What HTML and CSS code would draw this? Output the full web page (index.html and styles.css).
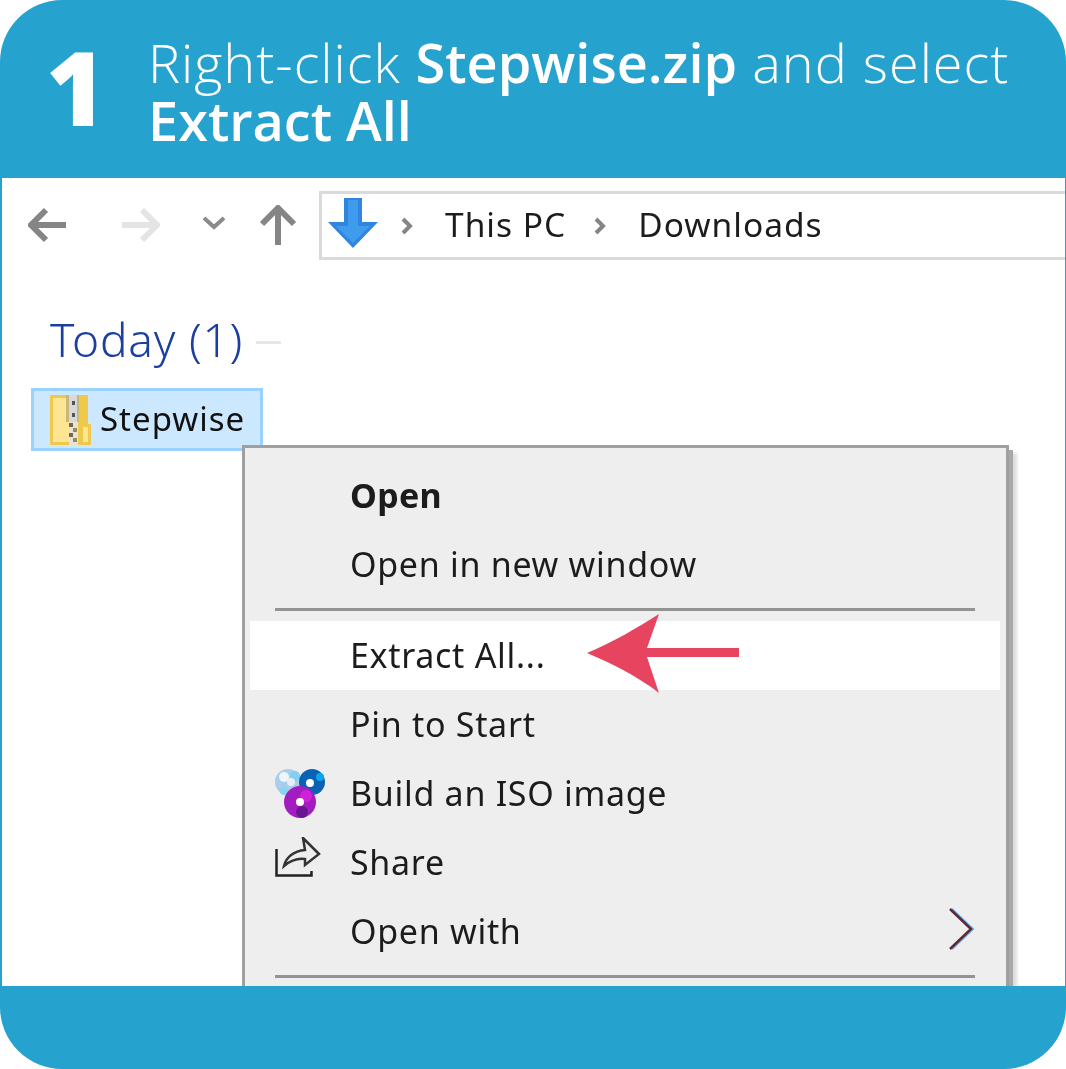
FILE: index.html
```html
<!doctype html>
<html lang="en">
<head>
    <meta charset="UTF-8">
    <meta name="viewport" content="width=device-width, initial-scale=1.0">
    <title>Step 1 - Extract All</title>
    <link rel="stylesheet" href="styles.css">
</head>
<body>
    <div class="card">
        <div class="card-head">
            <div class="step-num">1</div>
            <h1 class="step-title">Right-click <b>Stepwise.zip</b> and select <b>Extract All</b></h1>
        </div>

        <div class="shot">
            <!-- Explorer toolbar -->
            <div class="toolbar">
                <svg class="nav-icon nav-back" viewBox="0 0 40 36"><path d="M38 18H3M18 3L3 18l15 15" fill="none" stroke="#858585" stroke-width="6"/></svg>
                <svg class="nav-icon nav-fwd" viewBox="0 0 40 36"><path d="M2 18h35M22 3l15 15-15 15" fill="none" stroke="#e4e4e4" stroke-width="6"/></svg>
                <svg class="nav-icon nav-down" viewBox="0 0 22 14"><path d="M1 2l10 9 10-9" fill="none" stroke="#8a8a8a" stroke-width="4"/></svg>
                <svg class="nav-icon nav-up" viewBox="0 0 38 40"><path d="M19 40V4M3 19L19 3l16 16" fill="none" stroke="#858585" stroke-width="6"/></svg>
                <div class="address">
                    <svg class="addr-icon" viewBox="0 0 50 50"><path d="M16 0h18v24h16L25 50 0 24h16z" fill="#2f86dc"/><path d="M20 2h10v26h12L25 45 8 28h12z" fill="#3f9bee"/></svg>
                    <svg class="crumb-sep" viewBox="0 0 12 18"><path d="M2 2l7 7-7 7" fill="none" stroke="#858585" stroke-width="4"/></svg>
                    <span class="crumb">This PC</span>
                    <svg class="crumb-sep" viewBox="0 0 12 18"><path d="M2 2l7 7-7 7" fill="none" stroke="#858585" stroke-width="4"/></svg>
                    <span class="crumb">Downloads</span>
                </div>
            </div>

            <div class="group-head">
                <span class="group-name">Today (1)</span>
                <span class="group-line"></span>
            </div>

            <div class="file">
                <svg class="zip-icon" viewBox="0 0 41 50">
                    <rect x="0" y="0" width="38" height="50" fill="#eec94b"/>
                    <rect x="3" y="3" width="16" height="44" fill="#fde593"/>
                    <rect x="16" y="0" width="13" height="27" fill="#c8b878"/>
                    <rect x="19" y="0" width="8" height="27" fill="#d8d8d8"/>
                    <rect x="22" y="6" width="3" height="4" fill="#555"/>
                    <rect x="22" y="18" width="3" height="4" fill="#555"/>
                    <rect x="19" y="27" width="9" height="23" fill="#e8e4d4"/>
                    <rect x="19" y="28" width="4" height="4" fill="#6f6a50"/>
                    <rect x="23" y="33" width="4" height="4" fill="#8f8a6a"/>
                    <rect x="19" y="38" width="4" height="4" fill="#6f6a50"/>
                    <rect x="23" y="43" width="4" height="4" fill="#8f8a6a"/>
                    <rect x="28" y="29" width="13" height="21" fill="#eec94b"/>
                    <rect x="33" y="32" width="5" height="15" fill="#fde593"/>
                </svg>
                <span class="file-name">Stepwise</span>
            </div>

            <!-- Right-click menu -->
            <div class="menu">
                <div class="menu-item menu-default">Open</div>
                <div class="menu-item">Open in new window</div>
                <div class="menu-sep"></div>
                <div class="menu-item menu-hover">Extract All...</div>
                <div class="menu-item">Pin to Start</div>
                <div class="menu-item">
                    <svg class="menu-icon" viewBox="0 0 50 50">
                        <circle cx="13" cy="14" r="13" fill="#a9cdea"/>
                        <circle cx="9" cy="9" r="5" fill="#eef5fc"/>
                        <circle cx="20" cy="8" r="5" fill="#7fd0f2"/>
                        <circle cx="9" cy="23" r="4" fill="#86d6f2"/>
                        <circle cx="37" cy="14" r="13" fill="#0a62b5"/>
                        <circle cx="45" cy="9" r="4" fill="#12a4ea"/>
                        <circle cx="25" cy="34" r="16" fill="#a31cc0"/>
                        <circle cx="31" cy="28" r="6" fill="#d022d8"/>
                        <circle cx="27" cy="44" r="6" fill="#6a1590"/>
                        <circle cx="16" cy="14" r="4" fill="#e8eef8"/>
                        <circle cx="35" cy="15" r="4" fill="#fff"/>
                        <circle cx="25" cy="34" r="4" fill="#fff"/>
                    </svg>
                    Build an ISO image
                </div>
                <div class="menu-item">
                    <svg class="menu-icon menu-icon-share" viewBox="0 0 46 44">
                        <path d="M1.5 12v26.5h35V34" fill="none" stroke="#222" stroke-width="2.5"/>
                        <path d="M28 1l16 16-14 11v-6c-8-1-14 1-21 7 2-9 10-15 21-16z" fill="none" stroke="#333" stroke-width="2.5"/>
                    </svg>
                    Share
                </div>
                <div class="menu-item">
                    Open with
                    <svg class="menu-arrow" viewBox="0 0 26 42">
                        <path d="M3 1l21 20L3 41" fill="none" stroke="#62aef0" stroke-width="2"/>
                        <path d="M1 1l21 20L1 41" fill="none" stroke="#5c2a30" stroke-width="2.5"/>
                    </svg>
                </div>
                <div class="menu-sep"></div>
            </div>

            <svg class="pointer" viewBox="0 0 152 80"><path d="M0 39C26 28 50 14 72 0L60 34H152V43H60L72 79C50 62 26 50 0 39z" fill="#e6445f"/></svg>
        </div>

        <div class="card-foot"></div>
    </div>
</body>
</html>
```

FILE: styles.css
```css
html, body {
    margin: 0;
    padding: 0;
    background: #fff;
}

.card {
    width: 1066px;
    height: 1069px;
    border-radius: 62px;
    overflow: hidden;
    background: #26a2cf;
    display: flex;
    flex-direction: column;
    font-family: "Open Sans", sans-serif;
}

.card-head {
    height: 178px;
    display: flex;
    align-items: center;
    flex-shrink: 0;
    color: #fff;
}

.step-num {
    width: 148px;
    padding: 0 0 5px 46px;
    box-sizing: border-box;
    font-size: 102px;
    line-height: 1;
    font-weight: 800;
}

.step-title {
    margin: 0;
    padding-top: 3px;
    width: 905px;
    font-size: 54px;
    line-height: 58px;
    font-weight: 300;
    letter-spacing: 1px;
}

.step-title b {
    font-weight: 600;
    letter-spacing: 0;
}

.shot {
    position: relative;
    flex: 1;
    background: #fff;
    margin: 0 1px 0 2px;
    overflow: hidden;
    font-family: "Noto Sans", sans-serif;
    color: #1c1c1c;
}

.toolbar {
    display: flex;
    align-items: flex-start;
    padding: 13px 0 0 26px;
    height: 69px;
}

.nav-icon {
    flex-shrink: 0;
    filter: blur(0.4px);
}

.nav-back {
    width: 40px;
    height: 36px;
    margin-top: 16px;
}

.nav-fwd {
    width: 40px;
    height: 36px;
    margin: 16px 0 0 52px;
}

.nav-down {
    width: 22px;
    height: 14px;
    margin: 25px 0 0 43px;
}

.nav-up {
    width: 38px;
    height: 40px;
    margin: 14px 0 0 34px;
}

.address {
    flex: 1;
    height: 69px;
    box-sizing: border-box;
    margin-left: 22px;
    border: 3px solid #dadada;
    border-right: none;
    display: flex;
    align-items: center;
    padding-left: 6px;
    font-size: 33.5px;
}

.addr-icon {
    width: 50px;
    height: 50px;
    margin-top: -6px;
    filter: blur(0.4px);
}

.crumb-sep {
    width: 12px;
    height: 18px;
    margin: 0 32px 0 23px;
    filter: blur(0.4px);
}

.crumb {
    margin: -4px 5px 0 0;
    letter-spacing: 1px;
    filter: blur(0.5px);
}

.group-head {
    display: flex;
    align-items: center;
    margin: 49px 0 0 48px;
    height: 60px;
}

.group-name {
    font-size: 46px;
    font-weight: 300;
    letter-spacing: 0.8px;
    color: #1a3fa0;
    filter: blur(0.4px);
}

.group-line {
    width: 25px;
    height: 3px;
    margin: 7px 0 0 13px;
    background: #e6e6e6;
}

.file {
    display: flex;
    align-items: center;
    width: 232px;
    height: 63px;
    box-sizing: border-box;
    margin: 19px 0 0 29px;
    padding-left: 16px;
    background: #cce8ff;
    border: 3px solid #99d1ff;
    font-size: 33px;
    color: #111;
}

.zip-icon {
    width: 41px;
    height: 50px;
    margin-right: 9px;
    filter: blur(0.4px);
}

.file-name {
    letter-spacing: 1px;
    margin-top: -2px;
    filter: blur(0.5px);
}

.menu {
    position: absolute;
    left: 240px;
    top: 267px;
    width: 767px;
    height: 560px;
    box-sizing: border-box;
    padding: 13px 6px 0 5px;
    background: #eee;
    border: 3px solid #a0a0a0;
    box-shadow: 4px 5px 0 #a8a8a8, 8px 8px 3px #dedede;
    font-size: 34px;
    letter-spacing: 0.7px;
}

.menu-item {
    position: relative;
    height: 69px;
    line-height: 69px;
    padding-left: 100px;
    filter: blur(0.5px);
}

.menu-default {
    font-weight: 700;
    letter-spacing: 0.3px;
}

.menu-hover {
    background: #fff;
}

.menu-sep {
    height: 3px;
    margin: 9px 25px 10px;
    background: #939393;
}

.menu-icon {
    position: absolute;
    left: 25px;
    top: 9px;
    width: 50px;
    height: 50px;
}

.menu-icon-share {
    width: 46px;
    height: 44px;
}

.menu-arrow {
    position: absolute;
    right: 25px;
    top: 11px;
    width: 26px;
    height: 42px;
}

.pointer {
    position: absolute;
    left: 585px;
    top: 436px;
    width: 152px;
    height: 80px;
}

.card-foot {
    height: 83px;
    flex-shrink: 0;
}
```
